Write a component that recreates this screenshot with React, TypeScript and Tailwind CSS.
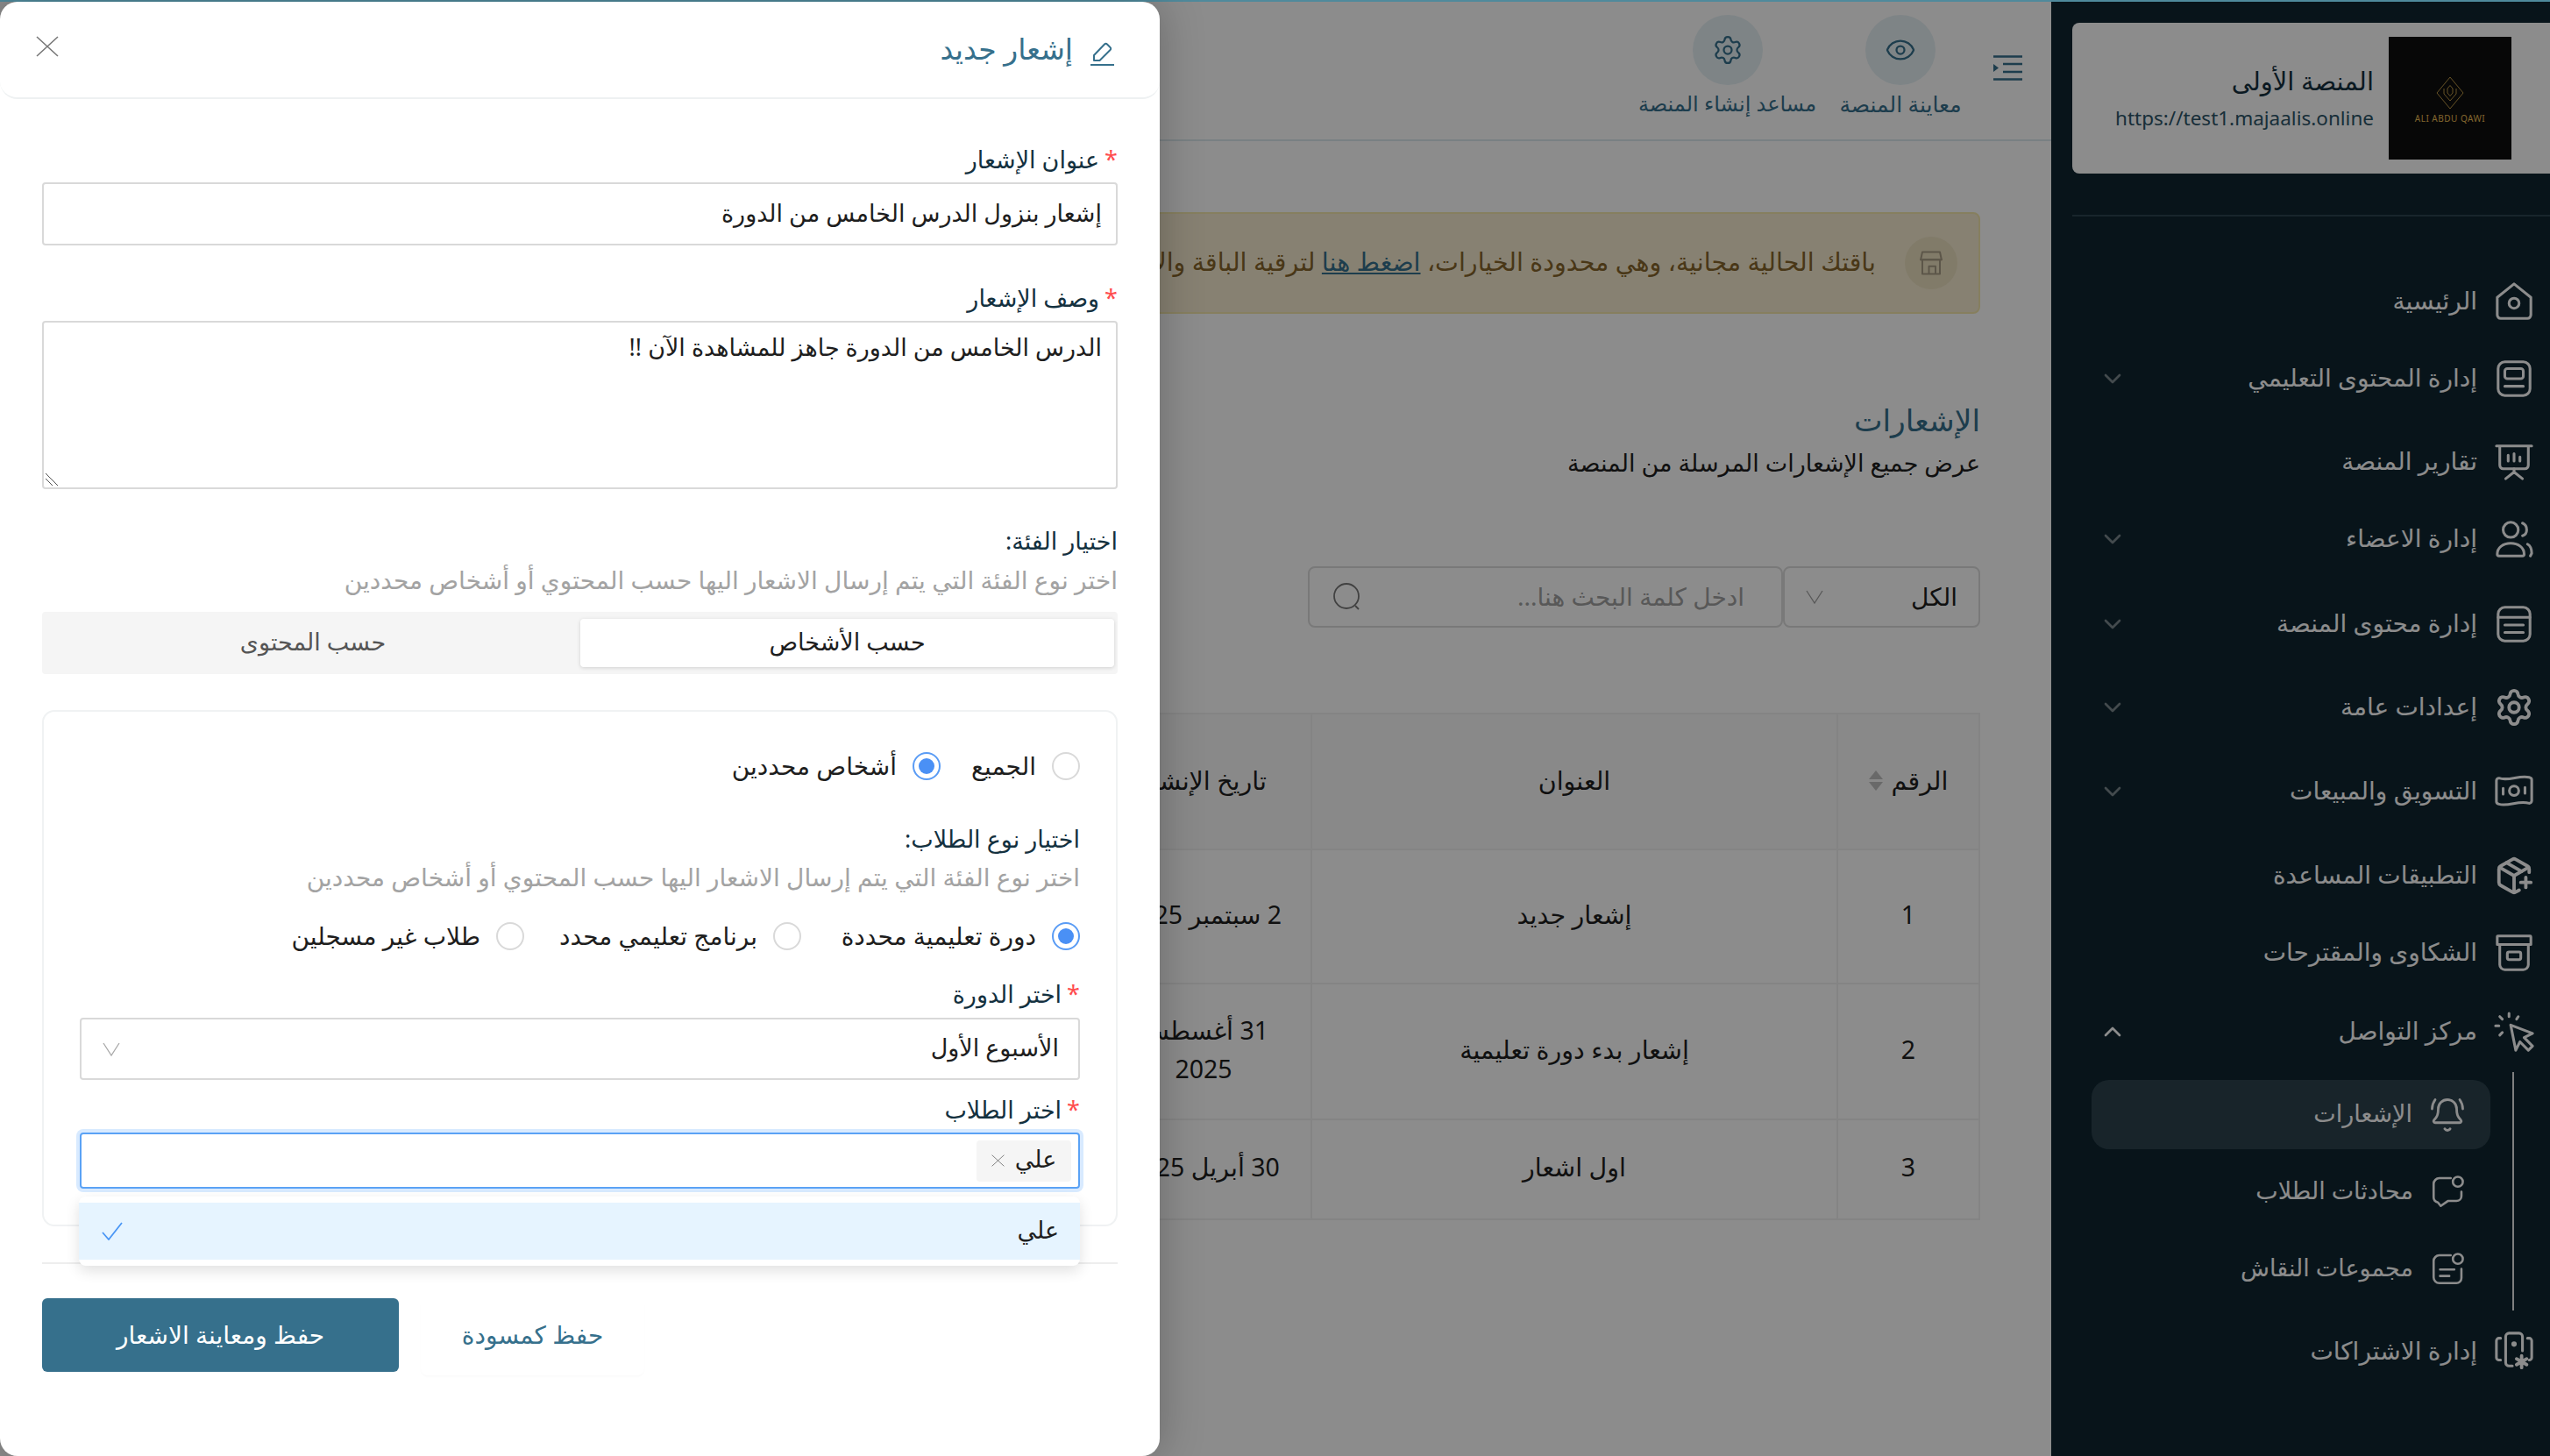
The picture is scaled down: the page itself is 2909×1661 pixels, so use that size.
import React from 'react';
import { BellRing, ChevronDown, ChevronUp, Eye, PackagePlus, Settings } from 'lucide-react';

const Svg = ({ className, children }: { className?: string; children: React.ReactNode }) => (
    <svg viewBox="0 0 24 24" fill="none" stroke="currentColor" strokeWidth={1.6} strokeLinecap="round" strokeLinejoin="round" className={className}>
        {children}
    </svg>
);

const HomeIcon = ({ className }: { className?: string }) => (
    <Svg className={className}>
        <path d="M2 9.5 12 1.5l10 8V20a2 2 0 0 1-2 2H4a2 2 0 0 1-2-2Z" />
        <circle cx="12" cy="13" r="3" />
    </Svg>
);
const ContentIcon = ({ className }: { className?: string }) => (
    <Svg className={className}>
        <rect x="2.5" y="2" width="19" height="20" rx="4" />
        <rect x="6.5" y="6" width="11" height="6" rx="1.5" />
        <path d="M6.5 16.5h11" />
    </Svg>
);
const ReportsIcon = ({ className }: { className?: string }) => (
    <Svg className={className}>
        <path d="M1.5 2.5h21M3.5 2.5V14a2 2 0 0 0 2 2h13a2 2 0 0 0 2-2V2.5" />
        <path d="M8.5 8v3.5M12 7v4.5M15.5 9v2.5M12 16v2.5M12 18l-5 4M12 18l5 4" />
    </Svg>
);
const UsersIcon = ({ className }: { className?: string }) => (
    <Svg className={className}>
        <circle cx="10" cy="6.5" r="4.5" />
        <path d="M2 21c0-4 3.5-6.5 8-6.5s8 2.5 8 6.5c0 .6-.4 1-1 1H3c-.6 0-1-.4-1-1Z" />
        <path d="M17 2.5c2 .8 2.5 2.5 2.5 4s-.8 3-2.5 3.5M20 15c1.5.8 2.5 3 2.5 5.5l-.8 1.5" />
    </Svg>
);
const PagesIcon = ({ className }: { className?: string }) => (
    <Svg className={className}>
        <rect x="2.5" y="2" width="19" height="20" rx="4" />
        <path d="M2.5 8h19M6.5 12.5h11M6.5 17h11" />
    </Svg>
);
const MoneyIcon = ({ className }: { className?: string }) => (
    <Svg className={className}>
        <path d="M1.5 5.5c0-1 .8-1.5 1.5-1.5 6 2 12-2 18-.5.8.2 1.5.7 1.5 1.5v12.500c0 1-.8 1.500-1.500 1.500-6-2-12 2-18 .5-.8-.2-1.500-.7-1.500-1.500Z" />
        <circle cx="12" cy="11.5" r="2.8" />
        <path d="M5.5 10v3.5M18.5 9.5V13" />
    </Svg>
);
const ArchiveIcon = ({ className }: { className?: string }) => (
    <Svg className={className}>
        <path d="M2.5 2h19a.5.5 0 0 1 .5.5V7H2V2.5a.5.5 0 0 1 .5-.5Z" />
        <path d="M3.5 7v12a3 3 0 0 0 3 3h11a3 3 0 0 0 3-3V7" />
        <rect x="8" y="11.5" width="8" height="4.5" rx="1" />
    </Svg>
);
const ClickIcon = ({ className }: { className?: string }) => (
    <Svg className={className}>
        <path d="M10 8 23 13l-5 2.5 5 5-2.5 2.5-5-5-2.5 5Z" />
        <path d="M9 1v2M14.5 3l-1 1.5M3.500 3 5 4.500M1 8.500h2M3.500 14 5 12.500" />
    </Svg>
);
const ChatIcon = ({ className }: { className?: string }) => (
    <Svg className={className}>
        <path d="M14 2.5H6a4 4 0 0 0-4 4V16c0 2 1 3 3 3.5L7 22l5-3.5h6c2 0 3.5-1.5 3.5-3.5V12" />
        <circle cx="19" cy="5" r="3.5" />
    </Svg>
);
const NoteIcon = ({ className }: { className?: string }) => (
    <Svg className={className}>
        <path d="M14 2.5H6a4 4 0 0 0-4 4V18a4 4 0 0 0 4 4h12a3.5 3.5 0 0 0 3.5-3.5V12" />
        <path d="M6.5 12.5h10M6.5 17H13" />
        <circle cx="19" cy="5" r="3.5" />
    </Svg>
);
const SubsIcon = ({ className }: { className?: string }) => (
    <Svg className={className}>
        <path d="M11 21H9a2 2 0 0 1-2-2V3.5a2 2 0 0 1 2-2h6a2 2 0 0 1 2 2V12" />
        <path d="M4 4.5H3A1.5 1.5 0 0 0 1.5 6v10A1.5 1.5 0 0 0 3 17.5h1M20 4.5h1A1.5 1.5 0 0 1 22.5 6v10a1.5 1.5 0 0 1-1.5 1.5" />
        <circle cx="12" cy="8" r=".8" fill="currentColor" />
        <path d="M16.5 15v7M13.5 16.8l6 3.4M19.5 16.8l-6 3.4" strokeWidth={2} />
    </Svg>
);
const StoreIcon = ({ className }: { className?: string }) => (
    <Svg className={className}>
        <path d="M4 2h16l1.500 7H2.500Z" />
        <path d="M4 9v13h16V9M10 22v-7h6v7M2.500 9h19" />
    </Svg>
);
const MenuIcon = ({ className }: { className?: string }) => (
    <svg viewBox="0 0 33 29" className={className} fill="none" stroke="currentColor" strokeWidth="2.5">
        <path d="M0 1.5h33M11 10h22M11 19h22M0 27.5h33" />
        <path d="M0 10l6 4.500-6 4.500Z" fill="currentColor" stroke="none" />
    </svg>
);
const ThinChevron = ({ className }: { className?: string }) => (
    <svg viewBox="0 0 20 16" className={className} fill="none" stroke="currentColor" strokeWidth="1.3">
        <path d="M1 1l9 14 9-14" />
    </svg>
);
const ThinX = ({ className }: { className?: string }) => (
    <svg viewBox="0 0 26 24" className={className} fill="none" stroke="currentColor" strokeWidth="1.6">
        <path d="M1 1l24 22M25 1 1 23" />
    </svg>
);
const PencilIcon = ({ className }: { className?: string }) => (
    <svg viewBox="0 0 29 27" className={className} fill="none" stroke="currentColor" strokeWidth="2" strokeLinejoin="round">
        <path d="M1 26h27" />
        <path d="M5 21v-6L17 2.5a2 2 0 0 1 3 0l3.5 3.5a2 2 0 0 1 0 3L11.5 21Z" />
    </svg>
);

const navTop = [
    { label: 'الرئيسية', icon: HomeIcon, chevron: false, gap: 'mt-0' },
    { label: 'إدارة المحتوى التعليمي', icon: ContentIcon, chevron: true, gap: 'mt-[28px]' },
    { label: 'تقارير المنصة', icon: ReportsIcon, chevron: false, gap: 'mt-[35px]' },
    { label: 'إدارة الاعضاء', icon: UsersIcon, chevron: true, gap: 'mt-[28px]' },
    { label: 'إدارة محتوى المنصة', icon: PagesIcon, chevron: true, gap: 'mt-[37px]' },
    { label: 'إعدادات عامة', icon: Settings, chevron: true, gap: 'mt-[35px]' },
    { label: 'التسويق والمبيعات', icon: MoneyIcon, chevron: true, gap: 'mt-[36px]' },
    { label: 'التطبيقات المساعدة', icon: PackagePlus, chevron: false, gap: 'mt-[36px]' },
    { label: 'الشكاوى والمقترحات', icon: ArchiveIcon, chevron: false, gap: 'mt-[28px]' },
];

const Sidebar = () => (
    <aside className="w-[569px] shrink-0 bg-[#0f2631] text-white pt-[24px]">
        <div className="me-[24px] h-[172px] bg-white rounded-e-[8px] flex items-center ps-[44px] gap-[17px]">
            <div className="w-[140px] h-[140px] bg-[#0d0d0d] flex flex-col items-center justify-center shrink-0">
                <svg viewBox="0 0 32 38" className="w-[32px] h-[38px] mt-[4px] text-[#e8bb55]" fill="none" stroke="currentColor" strokeWidth="0.8">
                    <path d="M16 1 31 19 16 37 1 19Z" />
                    <path d="M9 14v6l7 8 7-8v-6" />
                    <path d="M13 14v5l3 3.5 3-3.5v-5L16 10.5Z" />
                </svg>
                <div dir="ltr" className="text-[10px] leading-[14px] mt-[3px] text-[#e8bb55] tracking-[0.5px]">ALI ABDU QAWI</div>
            </div>
            <div className="text-[#14313f]">
                <div className="text-[29px] leading-[40px]">المنصة الأولى</div>
                <div dir="ltr" className="text-[22.5px] leading-[36px] mt-[5px] text-[#2c5468]">https://test1.majaalis.online</div>
            </div>
        </div>
        <div className="me-[24px] mt-[47px] border-t-2 border-[#2d4450]" />
        <nav className="mt-[67px]">
            {navTop.map(item => (
                <div key={item.label} className={`h-[60px] flex items-center ps-[18px] pe-[54px] gap-[19px] ${item.gap}`}>
                    <item.icon className="w-[46px] h-[46px] shrink-0" />
                    <span className="text-[28px] pb-[5px]">{item.label}</span>
                    {item.chevron && <ChevronDown className="ms-auto w-[32px] h-[32px] text-white/45" />}
                </div>
            ))}
            <div className="h-[60px] flex items-center ps-[18px] pe-[54px] gap-[19px] mt-[30px]">
                <ClickIcon className="w-[46px] h-[46px] shrink-0" />
                <span className="text-[28px] pb-[5px]">مركز التواصل</span>
                <ChevronUp className="ms-auto w-[32px] h-[32px]" />
            </div>
            <div className="mt-[16px] ms-[41px] me-[46px] border-s-2 border-white/90 ps-[25px] pt-[9px] pb-[8px]">
                <div className="h-[79px] rounded-[20px] bg-[#2d434e] flex items-center ps-[28px] gap-[19px]">
                    <BellRing className="w-[42px] h-[42px] shrink-0" strokeWidth={1.6} />
                    <span className="text-[27px] pb-[3px]">الإشعارات</span>
                </div>
                <div className="h-[79px] mt-[9px] flex items-center ps-[29px] gap-[20px]">
                    <ChatIcon className="w-[39px] h-[39px] shrink-0" />
                    <span className="text-[27px] pb-[3px]">محادثات الطلاب</span>
                </div>
                <div className="h-[79px] mt-[9px] flex items-center ps-[29px] gap-[20px]">
                    <NoteIcon className="w-[39px] h-[39px] shrink-0" />
                    <span className="text-[27px] pb-[3px]">مجموعات النقاش</span>
                </div>
            </div>
            <div className="h-[60px] flex items-center ps-[18px] pe-[54px] gap-[19px] mt-[16px]">
                <SubsIcon className="w-[46px] h-[46px] shrink-0" />
                <span className="text-[28px] pb-[3px]">إدارة الاشتراكات</span>
            </div>
        </nav>
    </aside>
);

const Main = () => (
    <main className="flex-1 min-w-0 bg-white overflow-hidden">
        <header className="h-[159px] border-b-2 border-[#dde9ee] flex items-start ps-[33px] text-[#36708c]">
            <MenuIcon className="w-[33px] h-[29px] mt-[61px] shrink-0" />
            <div className="ms-[35px] w-[142px] flex flex-col items-center pt-[15px]">
                <div className="w-[80px] h-[80px] rounded-full bg-[#e6f1f5] flex items-center justify-center">
                    <Eye className="w-[36px] h-[36px]" strokeWidth={1.5} />
                </div>
                <div className="text-[25px] leading-[36px] mt-[3px] whitespace-nowrap">معاينة المنصة</div>
            </div>
            <div className="ms-[26px] w-[201px] flex flex-col items-center pt-[15px]">
                <div className="w-[80px] h-[80px] rounded-full bg-[#e6f1f5] flex items-center justify-center">
                    <Settings className="w-[36px] h-[36px]" strokeWidth={1.5} />
                </div>
                <div className="text-[24px] leading-[36px] mt-[3px] whitespace-nowrap">مساعد إنشاء المنصة</div>
            </div>
        </header>
        <div className="ps-[81px] pt-[81px]">
            <div className="w-[2000px] h-[116px] rounded-[8px] border-2 border-[#f4e8ad] bg-[#f6ecd0] flex items-center ps-[24px] gap-[33px] text-[#86642a] text-[28.5px]">
                <div className="w-[60px] h-[60px] rounded-full bg-[#ece0c0] flex items-center justify-center">
                    <StoreIcon className="w-[30px] h-[30px] text-[#a89d85]" />
                </div>
                <div className="whitespace-nowrap pb-[3px]">
                    باقتك الحالية مجانية، وهي محدودة الخيارات، <span className="text-[#36708c] underline">اضغط هنا</span> لترقية الباقة والاستفادة من جميع المميزات
                </div>
            </div>
            <h2 className="mt-[96px] text-[34.5px] leading-[50px] text-[#36708c]">الإشعارات</h2>
            <p className="mt-[4px] text-[27px] leading-[40px] text-[#1e1e1e]">عرض جميع الإشعارات المرسلة من المنصة</p>
            <div className="mt-[98px] h-[70px] flex">
                <div className="w-[225px] rounded-[8px] border-2 border-[#dcdcdc] flex items-center ps-[24px] text-[28px] text-[#1e1e1e]">
                    <span className="pb-[3px]">الكل</span>
                    <ThinChevron className="ms-auto me-[24px] w-[20px] h-[16px] text-[#a0a0a0]" />
                </div>
                <div className="w-[542px] rounded-[8px] border-2 border-[#dcdcdc] flex items-center ps-[42px] pe-[26px] text-[28px] text-[#a0a0a0]">
                    <span className="pb-[3px]">ادخل كلمة البحث هنا...</span>
                    <svg viewBox="0 0 34 34" className="ms-auto w-[34px] h-[34px] text-[#777]" fill="none" stroke="currentColor" strokeWidth="1.8">
                        <circle cx="16" cy="16" r="14" />
                        <path d="M26 27l4 4" />
                    </svg>
                </div>
            </div>
            <table className="mt-[97px] w-[2000px] table-fixed border-collapse text-center text-[28.5px] text-[#1e1e1e]">
                <colgroup>
                    <col className="w-[162px]" />
                    <col className="w-[600px]" />
                    <col className="w-[246px]" />
                    <col />
                </colgroup>
                <thead className="bg-[#f9f9f9]">
                    <tr className="h-[155px]">
                        <th className="border-2 border-[#f0f0f0] font-normal pb-[3px]">
                            <div className="flex items-center justify-center gap-[10px]">
                                الرقم
                                <span className="flex flex-col gap-[3px]">
                                    <span className="w-0 h-0 border-x-[8px] border-x-transparent border-b-[10px] border-b-[#bfbfbf]" />
                                    <span className="w-0 h-0 border-x-[8px] border-x-transparent border-t-[10px] border-t-[#bfbfbf]" />
                                </span>
                            </div>
                        </th>
                        <th className="border-2 border-[#f0f0f0] font-normal pb-[3px]">العنوان</th>
                        <th className="border-2 border-[#f0f0f0] font-normal pb-[3px]">تاريخ الإنشاء</th>
                        <th className="border-2 border-[#f0f0f0]" />
                    </tr>
                </thead>
                <tbody>
                    <tr className="h-[153px]">
                        <td className="border-2 border-[#f0f0f0] pb-[5px]">1</td>
                        <td className="border-2 border-[#f0f0f0] pb-[5px]">إشعار جديد</td>
                        <td className="border-2 border-[#f0f0f0] pb-[5px]">2 سبتمبر 2025</td>
                        <td className="border-2 border-[#f0f0f0]" />
                    </tr>
                    <tr className="h-[155px]">
                        <td className="border-2 border-[#f0f0f0] pb-[5px]">2</td>
                        <td className="border-2 border-[#f0f0f0] pb-[5px]">إشعار بدء دورة تعليمية</td>
                        <td className="border-2 border-[#f0f0f0] pb-[5px] leading-[44px]">31 أغسطس<br />2025</td>
                        <td className="border-2 border-[#f0f0f0]" />
                    </tr>
                    <tr className="h-[114px]">
                        <td className="border-2 border-[#f0f0f0] pb-[5px]">3</td>
                        <td className="border-2 border-[#f0f0f0] pb-[5px]">اول اشعار</td>
                        <td className="border-2 border-[#f0f0f0] pb-[5px]">30 أبريل 2025</td>
                        <td className="border-2 border-[#f0f0f0]" />
                    </tr>
                </tbody>
            </table>
        </div>
    </main>
);

const Label = ({ text, className }: { text: string; className?: string }) => (
    <div className={`h-[36px] flex items-center gap-[6px] text-[27px] text-[#14313f] pb-[3px] ${className ?? ''}`}>
        <span className="text-[#ff4d4f]">*</span>
        <span>{text}</span>
    </div>
);

const Radio = ({ checked, text, className }: { checked?: boolean; text: string; className?: string }) => (
    <div className={`flex items-center gap-[18px] text-[28px] text-[#1e1e1e] ${className ?? ''}`}>
        <span className={`w-[32px] h-[32px] shrink-0 rounded-full border-2 flex items-center justify-center ${checked ? 'border-[#5a9cf5]' : 'border-[#d9d9d9]'}`}>
            {checked && <span className="w-[18px] h-[18px] rounded-full bg-[#4a90f5]" />}
        </span>
        <span className="pb-[3px] whitespace-nowrap">{text}</span>
    </div>
);

const Modal = () => (
    <div className="absolute top-0 bottom-0 left-0 w-[1323px] bg-white rounded-[20px] shadow-[0_0_50px_rgba(0,0,0,0.25)]">
        <div className="h-[111px] rounded-[20px] border-b-2 border-[#eef1f2] flex items-start justify-between ps-[51px] pe-[41px]">
            <div className="mt-[29px] flex items-center gap-[19px] text-[33px] text-[#36708c]">
                <PencilIcon className="w-[29px] h-[27px] mt-[6px]" />
                <span className="pb-[6px]">إشعار جديد</span>
            </div>
            <ThinX className="mt-[39px] w-[26px] h-[24px] text-[#777]" />
        </div>
        <div className="px-[48px] pt-[53px]">
            <Label text="عنوان الإشعار" />
            <input readOnly defaultValue="إشعار بنزول الدرس الخامس من الدورة" className="mt-[6px] block w-full h-[72px] border-2 border-[#d9d9d9] rounded-[4px] px-[16px] pb-[3px] text-[27px] text-[#1e1e1e] outline-none" />
            <Label text="وصف الإشعار" className="mt-[44px]" />
            <div className="relative mt-[6px]">
                <textarea readOnly defaultValue="الدرس الخامس من الدورة جاهز للمشاهدة الآن !!" className="block w-full h-[192px] border-2 border-[#d9d9d9] rounded-[4px] px-[16px] py-[8px] text-[27px] text-[#1e1e1e] outline-none resize-none" />
                <svg viewBox="0 0 16 16" className="absolute left-[3px] bottom-[3px] w-[16px] h-[16px] text-[#555]" fill="none" stroke="currentColor" strokeWidth="1">
                    <path d="M1 1l14 14M1 7l8 8" />
                </svg>
            </div>
            <div className="mt-[43px] h-[36px] pb-[3px] flex items-center text-[27px] text-[#14313f]">اختيار الفئة:</div>
            <div className="mt-[7px] h-[36px] pb-[3px] flex items-center text-[28px] text-[#a3a3a3]">اختر نوع الفئة التي يتم إرسال الاشعار اليها حسب المحتوي أو أشخاص محددين</div>
            <div className="mt-[18px] h-[71px] bg-[#f5f5f5] rounded-[4px] flex p-[8px_4px] text-[27px]">
                <div className="w-[609px] h-[55px] pb-[3px] bg-white rounded-[4px] shadow-[0_1px_4px_rgba(0,0,0,0.15)] flex items-center justify-center text-[#1e1e1e]">حسب الأشخاص</div>
                <div className="flex-1 pb-[3px] flex items-center justify-center text-[#555]">حسب المحتوى</div>
            </div>
            <div className="mt-[41px] border-2 border-[#f0f2f3] rounded-[14px] px-[41px] pt-[42px] pb-[41px]">
                <div className="h-[40px] flex items-center gap-[32px]">
                    <Radio text="الجميع" className="w-[127px]" />
                    <Radio checked text="أشخاص محددين" />
                </div>
                <div className="mt-[47px] h-[36px] pb-[3px] flex items-center text-[27px] text-[#14313f]">اختيار نوع الطلاب:</div>
                <div className="mt-[6px] h-[36px] pb-[3px] flex items-center text-[28px] text-[#a3a3a3]">اختر نوع الفئة التي يتم إرسال الاشعار اليها حسب المحتوي أو أشخاص محددين</div>
                <div className="mt-[29px] h-[40px] flex items-center gap-[32px]">
                    <Radio checked text="دورة تعليمية محددة" className="w-[286px]" />
                    <Radio text="برنامج تعليمي محدد" className="w-[284px]" />
                    <Radio text="طلاب غير مسجلين" className="w-[249px]" />
                </div>
                <Label text="اختر الدورة" className="mt-[30px]" />
                <div className="mt-[7px] h-[71px] border-2 border-[#d9d9d9] rounded-[4px] flex items-center justify-between ps-[22px] pe-[24px] text-[27px] text-[#1e1e1e]">
                    <span className="pb-[3px]">الأسبوع الأول</span>
                    <ThinChevron className="w-[20px] h-[16px] text-[#a8a8a8]" />
                </div>
                <Label text="اختر الطلاب" className="mt-[18px]" />
                <div className="relative mt-[6px] h-[64px] border-2 border-[#5aa2f5] rounded-[4px] shadow-[0_0_0_4px_#d8eaff] flex items-center ps-[8px] text-[27px] text-[#1e1e1e]">
                    <div className="h-[47px] w-[108px] bg-[#f5f5f5] rounded-[4px] flex items-center justify-center gap-[12px]">
                        <span className="pb-[3px]">علي</span>
                        <ThinX className="w-[15px] h-[14px] text-[#777]" />
                    </div>
                    <div className="absolute z-10 top-[71px] -left-[3px] -right-[2px] h-[79px] bg-white rounded-[8px] shadow-[0_6px_16px_rgba(0,0,0,0.12)] py-[7px]">
                        <div className="h-[65px] bg-[#e6f4ff] flex items-center justify-between ps-[24px] pe-[26px]">
                            <span className="pb-[3px]">علي</span>
                            <svg viewBox="0 0 24 21" className="w-[24px] h-[21px] text-[#4a96f5]" fill="none" stroke="currentColor" strokeWidth="1.8">
                                <path d="M1 12l7 8L23 1" />
                            </svg>
                        </div>
                    </div>
                </div>
            </div>
            <div className="mt-[41px] border-t-2 border-[#eeeeee]" />
            <div className="mt-[39px] flex justify-end gap-[25px] text-[28px]">
                <div className="w-[255px] h-[88px] pb-[6px] bg-white rounded-[8px] shadow-[0_2px_2px_rgba(0,0,0,0.02)] flex items-center justify-center text-[#36708c]">حفظ كمسودة</div>
                <div className="w-[407px] h-[84px] pb-[3px] bg-[#36708c] rounded-[6px] flex items-center justify-center text-white">حفظ ومعاينة الاشعار</div>
            </div>
        </div>
    </div>
);

export default function App() {
    return (
        <div dir="rtl" className="w-[2909px] h-[1661px] overflow-hidden flex flex-col [font-family:'Noto_Sans','DejaVu_Sans',sans-serif]">
            <div className="h-[2px] bg-[#4f8a9c] shrink-0" />
            <div className="relative flex-1 flex min-h-0">
                <Sidebar />
                <Main />
                <div className="absolute inset-0 bg-black/45" />
                <Modal />
            </div>
        </div>
    );
}
